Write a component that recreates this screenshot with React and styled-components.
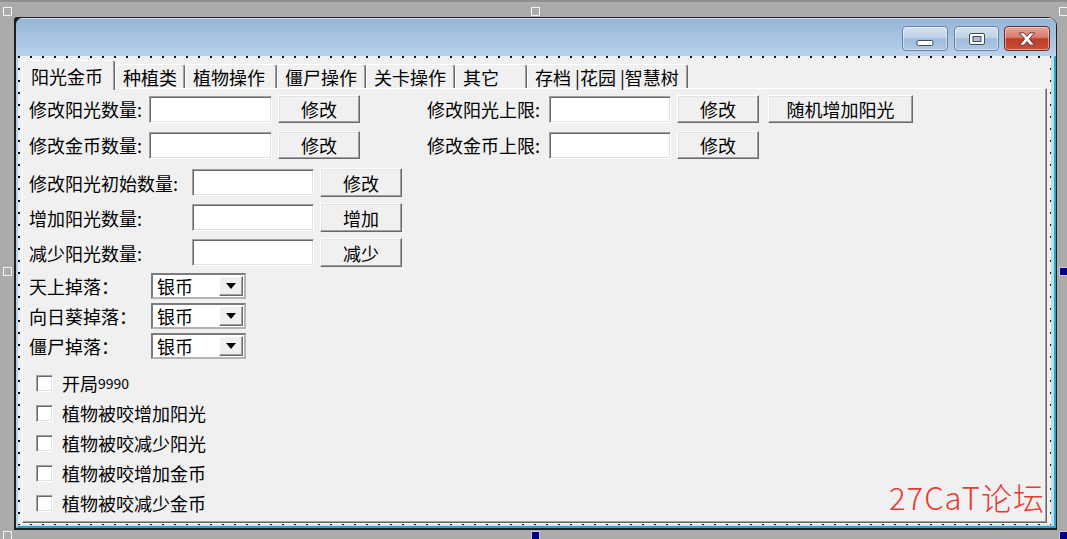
import React from "react";
import styled, { createGlobalStyle } from "styled-components";

const GlobalStyle = createGlobalStyle`
  html, body {
    margin: 0;
    padding: 0;
    background: #ababab;
  }
  body {
    font-family: "Noto Sans CJK SC", "Liberation Sans", sans-serif;
    color: #000;
  }
`;

const Stage = styled.div`
  position: relative;
  width: 1067px;
  height: 539px;
  box-sizing: border-box;
  padding: 17px 0 0 14px;
  overflow: hidden;
  background: #ababab;
  box-shadow: inset 0 2px 0 #8e8e8e;
`;

const Handle = styled.div`
  position: absolute;
  left: ${(p) => p.$x}px;
  top: ${(p) => p.$y}px;
  width: 9px;
  height: 9px;
  box-sizing: border-box;
  border: 1px solid ${(p) => (p.$filled ? "#c9c9e6" : "#f4f4f4")};
  background: ${(p) => (p.$filled ? "#00008a" : "transparent")};
`;

const Window = styled.div`
  width: 1043px;
  height: 513px;
  box-sizing: border-box;
  padding: 1px 1px 2px 2px;
  background: #1e1e1e;
  border-radius: 3px 9px 0 0;
  display: flex;
`;

const Frame = styled.div`
  flex: 1;
  display: flex;
  flex-direction: column;
  border-radius: 7px 7px 0 0;
  overflow: hidden;
  background: #bcd3ec;
`;

const TitleBar = styled.div`
  height: 38px;
  flex-shrink: 0;
  display: flex;
  align-items: flex-start;
  background: linear-gradient(#96b5d7, #a9c5e3 60%, #bad2ec);
  box-shadow: inset 0 1px 0 #d6e4f3;
`;

const CaptionButtons = styled.div`
  display: flex;
  margin: 8px 6px 0 auto;
`;

const CaptionButton = styled.div`
  width: ${(p) => p.$w}px;
  height: 25px;
  margin-left: ${(p) => p.$ml || 0}px;
  box-sizing: border-box;
  border-radius: 4px;
  display: flex;
  align-items: center;
  justify-content: center;
  border: 1px solid ${(p) => (p.$close ? "#6b2a22" : "#6b82a3")};
  background: ${(p) =>
    p.$close
      ? "linear-gradient(#e7a89a, #d77a69 45%, #bf3d28 52%, #c9503a 100%)"
      : "linear-gradient(#d3e1f0, #bfd2e9 45%, #a1bcdc 52%, #aec7e3 100%)"};
  box-shadow: inset 0 0 0 1px rgba(255, 255, 255, 0.45);
`;

const BodyFrame = styled.div`
  flex: 1;
  display: flex;
  border-left: 2px solid #b8d2ec;
  border-right: 2px solid #2aa5c5;
  border-bottom: 2px solid #2aa5c5;
`;

const Client = styled.div`
  flex: 1;
  display: flex;
  flex-direction: column;
  padding: 4px 4px 2px 4px;
  border-right: 3px solid #c5dcf0;
  border-bottom: 1px solid #c5dcf0;
  background-color: #f0f0f0;
  background-image: radial-gradient(
    circle at 1px 1px,
    #111 0.9px,
    transparent 1.3px
  );
  background-size: 12px 12px;
`;

const TabControl = styled.div`
  flex: 1;
  display: flex;
  flex-direction: column;
  background: #f0f0f0;
`;

const TabStrip = styled.div`
  position: relative;
  z-index: 1;
  height: 28px;
  display: flex;
  align-items: flex-end;
`;

const Tab = styled.div`
  box-sizing: border-box;
  width: ${(p) => p.$w}px;
  height: ${(p) => (p.$active ? 30 : 24)}px;
  margin-bottom: ${(p) => (p.$active ? -2 : 0)}px;
  padding-left: ${(p) => (p.$active ? 8 : 7)}px;
  display: flex;
  align-items: center;
  background: #f0f0f0;
  border-top: 1px solid #fff;
  border-left: 1px solid #fff;
  border-right: 1px solid #696969;
  box-shadow: inset -1px 0 0 #a0a0a0;
  border-radius: 3px 3px 0 0;
  font-size: 18px;
  white-space: pre;
`;

const Panel = styled.div`
  flex: 1;
  box-sizing: border-box;
  background: #f0f0f0;
  border-top: 1px solid #fff;
  border-left: 1px solid #fff;
  border-right: 1px solid #696969;
  border-bottom: 1px solid #696969;
  box-shadow: inset -1px -1px 0 #a0a0a0;
  padding: 6px 0 0 6px;
  display: flex;
  flex-direction: column;
`;

const TopSection = styled.div`
  display: flex;
`;

const Group = styled.div`
  display: flex;
  flex-direction: column;
  gap: ${(p) => p.$gap || 0}px;
  margin-left: ${(p) => p.$ml || 0}px;
  margin-top: ${(p) => p.$mt || 0}px;
`;

const Row = styled.div`
  display: flex;
  align-items: center;
  height: ${(p) => p.$h}px;
`;

const Label = styled.span`
  width: ${(p) => p.$w}px;
  flex-shrink: 0;
  font-size: 18px;
  white-space: nowrap;
  line-height: 1;
`;

const Field = styled.div`
  width: ${(p) => p.$w}px;
  height: 27px;
  box-sizing: border-box;
  background: #fff;
  border: 1px solid;
  border-color: #a0a0a0 #fff #fff #a0a0a0;
  box-shadow: inset 1px 1px 0 #696969, inset -1px -1px 0 #e3e3e3;
`;

const Button = styled.div`
  width: ${(p) => p.$w || 82}px;
  height: ${(p) => p.$h || 28}px;
  margin-left: ${(p) => p.$ml || 6}px;
  box-sizing: border-box;
  display: flex;
  align-items: center;
  justify-content: center;
  background: #f0f0f0;
  border: 1px solid;
  border-color: #fff #696969 #696969 #fff;
  box-shadow: inset -1px -1px 0 #a0a0a0, inset 1px 1px 0 #e3e3e3;
  font-size: 18px;
  white-space: nowrap;
`;

const Combo = styled.div`
  width: 95px;
  height: 26px;
  box-sizing: border-box;
  display: flex;
  align-items: center;
  background: #fff;
  border: 2px solid;
  border-color: #7c7c7c #b4b4b4 #b4b4b4 #7c7c7c;
  padding: 1px 1px 1px 4px;
`;

const ComboText = styled.span`
  flex: 1;
  font-size: 18px;
  line-height: 1;
`;

const ComboArrow = styled.div`
  width: 24px;
  height: 100%;
  box-sizing: border-box;
  display: flex;
  align-items: center;
  justify-content: center;
  background: #f0f0f0;
  border: 1px solid;
  border-color: #fff #696969 #696969 #fff;
  box-shadow: inset -1px -1px 0 #a0a0a0;
`;

const CheckRow = styled.div`
  display: flex;
  align-items: center;
  height: 30px;
  padding-left: 7px;
  font-size: 18px;
`;

const CheckBox = styled.div`
  width: 17px;
  height: 17px;
  box-sizing: border-box;
  margin-right: 9px;
  background: #fff;
  border: 1px solid;
  border-color: #a0a0a0 #fff #fff #a0a0a0;
  box-shadow: inset 1px 1px 0 #696969, inset -1px -1px 0 #e3e3e3;
`;

const Digits = styled.span`
  font-size: 14px;
`;

const Watermark = styled.div`
  position: absolute;
  left: 889px;
  top: 474px;
  font-size: 31px;
  font-weight: 300;
  color: #e83a30;
  letter-spacing: 1px;
  white-space: nowrap;
`;

const tabs = [
  { t: "阳光金币", w: 93 },
  { t: "种植类", w: 70 },
  { t: "植物操作", w: 92 },
  { t: "僵尸操作", w: 89 },
  { t: "关卡操作", w: 89 },
  { t: "其它", w: 72 },
  { t: "存档 |花园 |智慧树", w: 161 },
];

const checks = ["植物被咬增加阳光", "植物被咬减少阳光", "植物被咬增加金币", "植物被咬减少金币"];

const handles = [
  { x: 3, y: 7 },
  { x: 531, y: 7 },
  { x: 1059, y: 7 },
  { x: 3, y: 267 },
  { x: 1059, y: 267, f: true },
  { x: 3, y: 531 },
  { x: 531, y: 531, f: true },
  { x: 1059, y: 531, f: true },
];

function DropDown() {
  return (
    <Combo>
      <ComboText>银币</ComboText>
      <ComboArrow>
        <svg width="10" height="6" viewBox="0 0 10 6">
          <path d="M0 0 H10 L5 6 Z" fill="#000" />
        </svg>
      </ComboArrow>
    </Combo>
  );
}

export default function App() {
  return (
    <Stage>
      <GlobalStyle />
      {handles.map((h, i) => (
        <Handle key={i} $x={h.x} $y={h.y} $filled={h.f} />
      ))}
      <Window>
        <Frame>
          <TitleBar>
            <CaptionButtons>
              <CaptionButton $w={46}>
                <svg width="18" height="14" viewBox="0 0 18 14">
                  <rect x="1" y="8.5" width="16" height="5" rx="1.5" fill="#fff" stroke="#3d4b5e" />
                </svg>
              </CaptionButton>
              <CaptionButton $w={45} $ml={6}>
                <svg width="18" height="14" viewBox="0 0 18 14">
                  <rect x="1.5" y="1.5" width="15" height="11" rx="1.5" fill="#fff" stroke="#3d4b5e" />
                  <rect x="5" y="4.5" width="8" height="5" fill="#a8bfda" stroke="#3d4b5e" />
                </svg>
              </CaptionButton>
              <CaptionButton $w={46} $ml={5} $close>
                <svg width="18" height="14" viewBox="0 0 18 14">
                  <path
                    d="M1.5 0.8 H6 L9 4.4 L12 0.8 H16.5 L11.4 7 L16.5 13.2 H12 L9 9.6 L6 13.2 H1.5 L6.6 7 Z"
                    fill="#fff"
                    stroke="#5e2620"
                    strokeWidth="0.9"
                  />
                </svg>
              </CaptionButton>
            </CaptionButtons>
          </TitleBar>
          <BodyFrame>
            <Client>
              <TabControl>
                <TabStrip>
                  {tabs.map((tab, i) => (
                    <Tab key={tab.t} $w={tab.w} $active={i === 0}>
                      {tab.t}
                    </Tab>
                  ))}
                </TabStrip>
                <Panel>
                  <TopSection>
                    <Group $gap={8}>
                      <Row $h={28}>
                        <Label $w={120}>修改阳光数量:</Label>
                        <Field $w={123} />
                        <Button>修改</Button>
                      </Row>
                      <Row $h={28}>
                        <Label $w={120}>修改金币数量:</Label>
                        <Field $w={123} />
                        <Button>修改</Button>
                      </Row>
                    </Group>
                    <Group $gap={8} $ml={67}>
                      <Row $h={28}>
                        <Label $w={122}>修改阳光上限:</Label>
                        <Field $w={122} />
                        <Button>修改</Button>
                        <Button $w={145} $ml={9}>
                          随机增加阳光
                        </Button>
                      </Row>
                      <Row $h={28}>
                        <Label $w={122}>修改金币上限:</Label>
                        <Field $w={122} />
                        <Button>修改</Button>
                      </Row>
                    </Group>
                  </TopSection>

                  <Group $gap={6} $mt={9}>
                    <Row $h={29}>
                      <Label $w={163}>修改阳光初始数量:</Label>
                      <Field $w={122} />
                      <Button $h={29}>修改</Button>
                    </Row>
                    <Row $h={29}>
                      <Label $w={163}>增加阳光数量:</Label>
                      <Field $w={122} />
                      <Button $h={29}>增加</Button>
                    </Row>
                    <Row $h={29}>
                      <Label $w={163}>减少阳光数量:</Label>
                      <Field $w={122} />
                      <Button $h={29}>减少</Button>
                    </Row>
                  </Group>

                  <Group $gap={5} $mt={6}>
                    <Row $h={25}>
                      <Label $w={122}>天上掉落：</Label>
                      <DropDown />
                    </Row>
                    <Row $h={25}>
                      <Label $w={122}>向日葵掉落：</Label>
                      <DropDown />
                    </Row>
                    <Row $h={25}>
                      <Label $w={122}>僵尸掉落：</Label>
                      <DropDown />
                    </Row>
                  </Group>

                  <Group $mt={10}>
                    <CheckRow>
                      <CheckBox />
                      开局<Digits>9990</Digits>
                    </CheckRow>
                    {checks.map((c) => (
                      <CheckRow key={c}>
                        <CheckBox />
                        {c}
                      </CheckRow>
                    ))}
                  </Group>
                </Panel>
              </TabControl>
            </Client>
          </BodyFrame>
        </Frame>
      </Window>
      <Watermark>27CaT论坛</Watermark>
    </Stage>
  );
}
